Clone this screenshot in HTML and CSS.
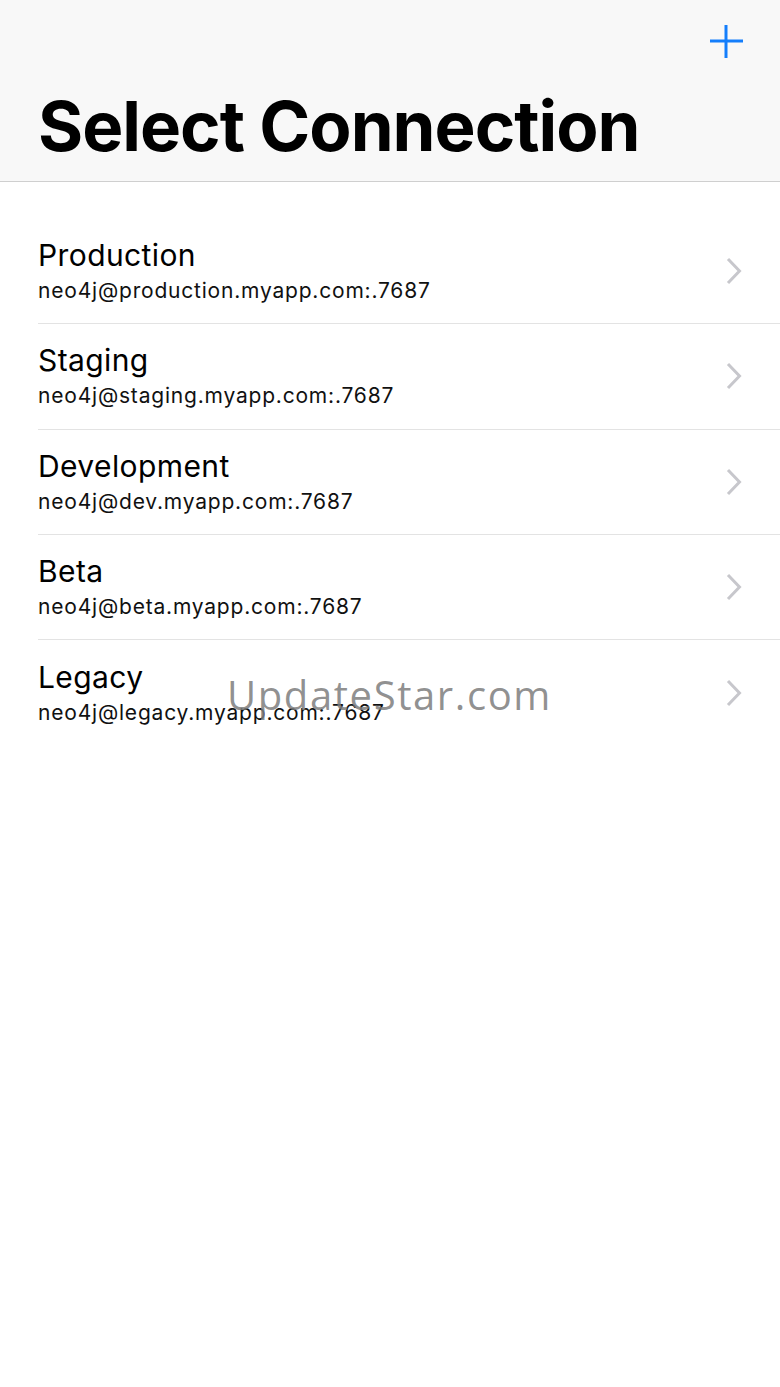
FILE: index.html
```html
<!DOCTYPE html>
<html>
<head>
<meta charset="utf-8">
<link rel="stylesheet" href="styles.css">
</head>
<body>
<header class="navbar">
  <div class="nav-actions">
    <svg class="plus" width="34" height="34" viewBox="0 0 34 34"><path d="M17 1V34M1 17H34" stroke="#147efb" stroke-width="3" fill="none"/></svg>
  </div>
  <h1 class="title">Select Connection</h1>
</header>
<main class="list">
  <div class="row"><div class="text"><div class="name">Production</div><div class="url">neo4j@production.myapp.com:.7687</div></div><svg class="chev" width="16" height="28" viewBox="0 0 16 28"><path d="M2 2L13.5 14L2 26" stroke="#c7c7cc" stroke-width="3" fill="none"/></svg></div>
  <div class="row"><div class="text"><div class="name">Staging</div><div class="url">neo4j@staging.myapp.com:.7687</div></div><svg class="chev" width="16" height="28" viewBox="0 0 16 28"><path d="M2 2L13.5 14L2 26" stroke="#c7c7cc" stroke-width="3" fill="none"/></svg></div>
  <div class="row"><div class="text"><div class="name">Development</div><div class="url">neo4j@dev.myapp.com:.7687</div></div><svg class="chev" width="16" height="28" viewBox="0 0 16 28"><path d="M2 2L13.5 14L2 26" stroke="#c7c7cc" stroke-width="3" fill="none"/></svg></div>
  <div class="row"><div class="text"><div class="name">Beta</div><div class="url">neo4j@beta.myapp.com:.7687</div></div><svg class="chev" width="16" height="28" viewBox="0 0 16 28"><path d="M2 2L13.5 14L2 26" stroke="#c7c7cc" stroke-width="3" fill="none"/></svg></div>
  <div class="row last"><div class="text"><div class="name">Legacy</div><div class="url">neo4j@legacy.myapp.com:.7687</div></div><svg class="chev" width="16" height="28" viewBox="0 0 16 28"><path d="M2 2L13.5 14L2 26" stroke="#c7c7cc" stroke-width="3" fill="none"/></svg></div>
</main>
<div class="watermark">UpdateStar.com</div>
</body>
</html>
```
FILE: styles.css
```css
html, body {
  margin: 0;
  padding: 0;
  background: #ffffff;
  font-family: "Inter", "Liberation Sans", sans-serif;
  color: #000;
}
body {
  position: relative;
  width: 780px;
  height: 1387px;
  overflow: hidden;
}
.navbar {
  background: #f8f8f8;
  border-bottom: 1px solid #cfcfcf;
  height: 182px;
  box-sizing: border-box;
  padding: 0 38px;
}
.nav-actions {
  display: flex;
  justify-content: flex-end;
  padding-top: 24px;
  margin-right: -1px;
  height: 34px;
}
.plus { display: block; }
.title {
  margin: 33px 0 0;
  font-size: 69px;
  font-weight: 700;
  letter-spacing: -1px;
  line-height: 70px;
}
.list {
  padding-top: 37px;
  padding-left: 38px;
}
.row {
  display: flex;
  align-items: center;
  height: 105.3px;
  border-bottom: 1px solid #e3e3e3;
  box-sizing: border-box;
  padding-right: 38px;
}
.row.last { border-bottom: none; }
.text { flex: 1; }
.name {
  font-size: 30px;
  line-height: 36px;
  letter-spacing: 0.4px;
}
.url {
  margin-top: 4px;
  font-size: 21px;
  line-height: 28px;
  letter-spacing: 0.8px;
  color: #111;
}
.chev { display: block; }
.watermark {
  position: absolute;
  left: 227px;
  top: 667px;
  font-family: "Open Sans", "Liberation Sans", sans-serif;
  font-size: 40px;
  letter-spacing: 1.6px;
  color: rgba(125, 125, 125, 0.85);
}
```
